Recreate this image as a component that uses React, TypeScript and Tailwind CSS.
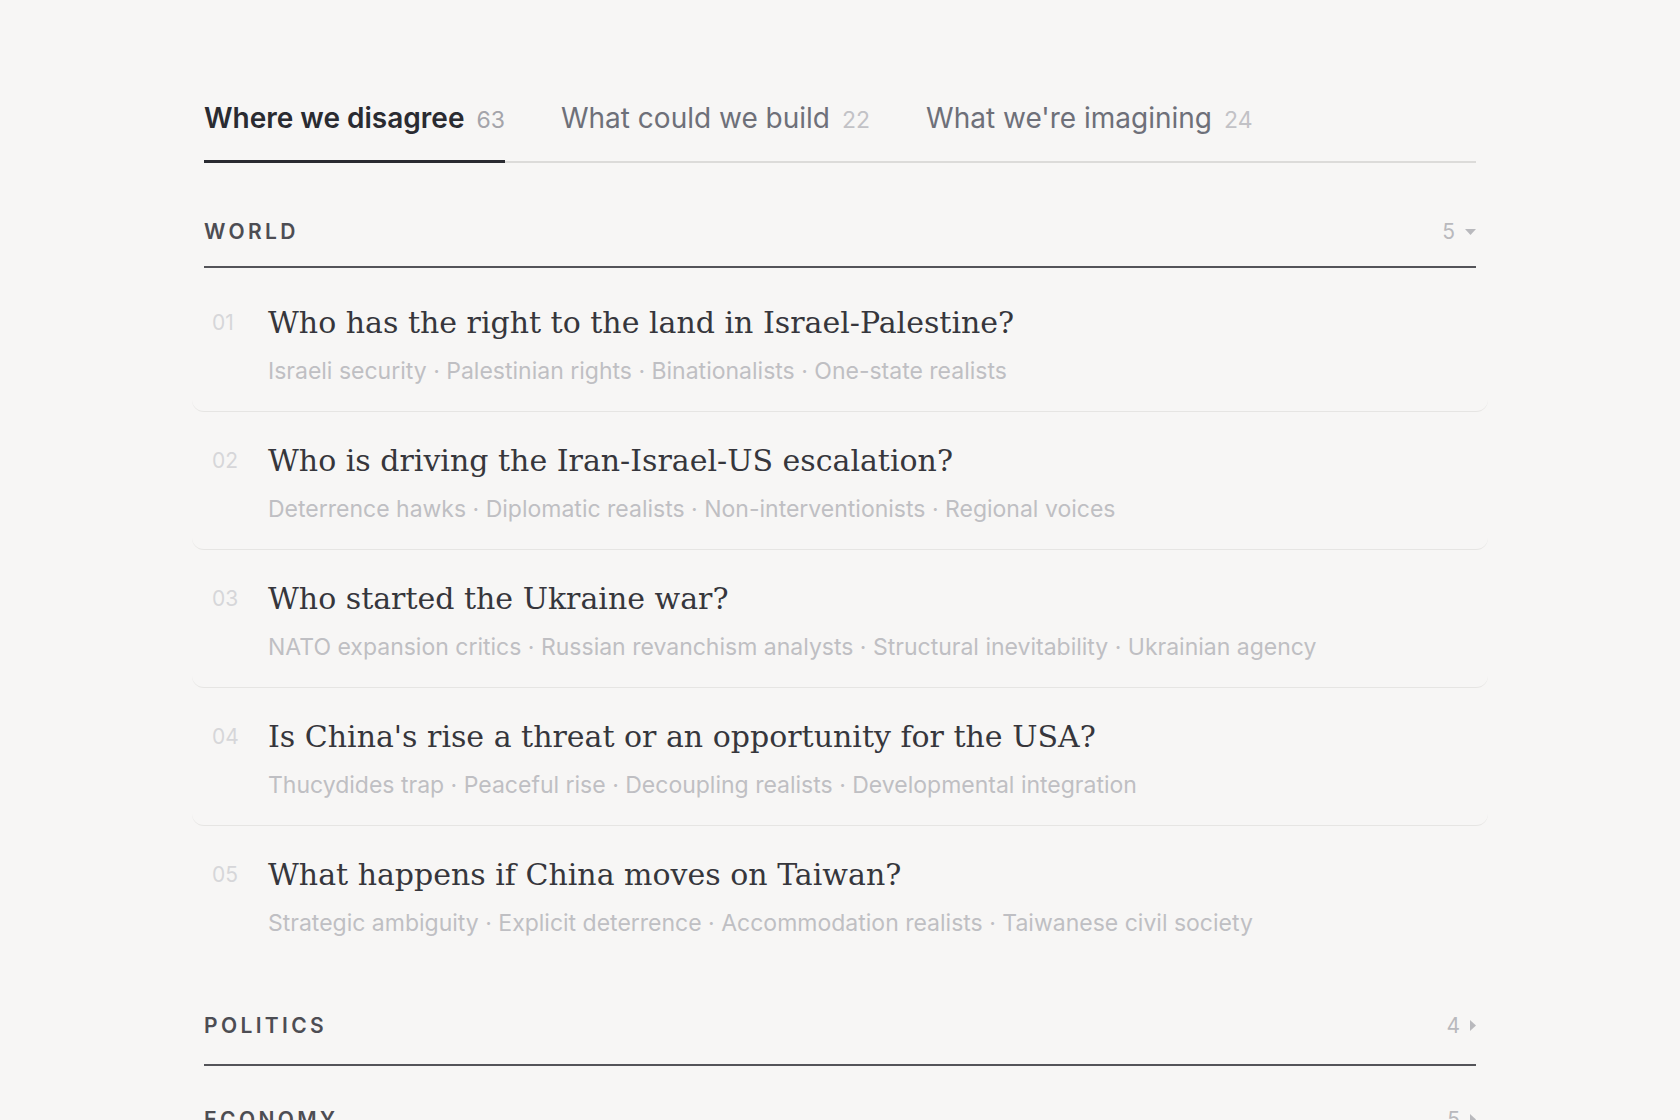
import React from 'react';

const tabs = [
  { label: 'Where we disagree', count: 63, active: true },
  { label: 'What could we build', count: 22, active: false },
  { label: "What we're imagining", count: 24, active: false },
];

const worldRows = [
  {
    q: 'Who has the right to the land in Israel-Palestine?',
    tags: ['Israeli security', 'Palestinian rights', 'Binationalists', 'One-state realists'],
  },
  {
    q: 'Who is driving the Iran-Israel-US escalation?',
    tags: ['Deterrence hawks', 'Diplomatic realists', 'Non-interventionists', 'Regional voices'],
  },
  {
    q: 'Who started the Ukraine war?',
    tags: ['NATO expansion critics', 'Russian revanchism analysts', 'Structural inevitability', 'Ukrainian agency'],
  },
  {
    q: "Is China's rise a threat or an opportunity for the USA?",
    tags: ['Thucydides trap', 'Peaceful rise', 'Decoupling realists', 'Developmental integration'],
  },
  {
    q: 'What happens if China moves on Taiwan?',
    tags: ['Strategic ambiguity', 'Explicit deterrence', 'Accommodation realists', 'Taiwanese civil society'],
  },
];

const sans = "font-['Inter',_'Liberation_Sans',_sans-serif]";

const SectionHeader = ({ title, count, open }: { title: string; count: number; open: boolean }) => (
  <div className={`flex items-center justify-between border-b-2 border-[#545459] ${open ? 'pb-5' : 'pb-6'}`}>
    <span className="text-[21px] leading-7 font-semibold tracking-[0.16em] text-[#4d4d53]">{title}</span>
    <span className="flex items-center gap-2.5 text-[21px] leading-7 text-[#b9b9bd]">
      {count}
      {open ? (
        <svg width="11" height="6" viewBox="0 0 11 6"><path d="M0 0h11L5.5 6z" fill="#b9b9bd" /></svg>
      ) : (
        <svg width="6" height="11" viewBox="0 0 6 11"><path d="M0 0l6 5.5-6 5.5z" fill="#b9b9bd" /></svg>
      )}
    </span>
  </div>
);

export default function App() {
  return (
    <div className={`min-h-screen bg-[#f7f6f5] ${sans}`}>
      <div className="mx-auto w-[1272px] pt-[100px]">
        {/* tabs */}
        <div className="flex gap-14 border-b-2 border-[#dcdbd9]">
          {tabs.map((t) => (
            <div
              key={t.label}
              className={`flex items-baseline gap-3 pb-[22px] -mb-[2px] border-b-[3px] ${t.active ? 'border-[#2a2b31]' : 'border-transparent'}`}
            >
              <span className={`text-[28px] leading-9 ${t.active ? 'font-semibold text-[#2a2b31]' : 'text-[#6e7079]'}`}>{t.label}</span>
              <span className={`text-[23px] ${t.active ? 'text-[#a4a4aa]' : 'text-[#c2c2c6]'}`}>{t.count}</span>
            </div>
          ))}
        </div>

        <div className="mt-[55px] flex flex-col gap-10">
          <section>
            <SectionHeader title="WORLD" count={5} open />
            <div className="mt-1.5 pb-[9px]">
              {worldRows.map((r, i) => (
                <div
                  key={r.q}
                  className={`-mx-3 px-5 pt-[29px] pb-[26px] flex items-start rounded-xl ${i < worldRows.length - 1 ? 'border-b border-[#e6e5e3]' : ''}`}
                >
                  <span className="w-[56px] shrink-0 text-[21px] leading-10 text-[#d6d6d9]">{String(i + 1).padStart(2, '0')}</span>
                  <div>
                    <div className="font-['DejaVu_Serif',_serif] text-[30px] leading-10 text-[#36363c]">{r.q}</div>
                    <div className="mt-[14px] text-[23px] leading-7 text-[#bfbfc3]">{r.tags.join(' · ')}</div>
                  </div>
                </div>
              ))}
            </div>
          </section>

          <section>
            <SectionHeader title="POLITICS" count={4} open={false} />
          </section>

          <section>
            <SectionHeader title="ECONOMY" count={5} open={false} />
          </section>
        </div>
      </div>
    </div>
  );
}
